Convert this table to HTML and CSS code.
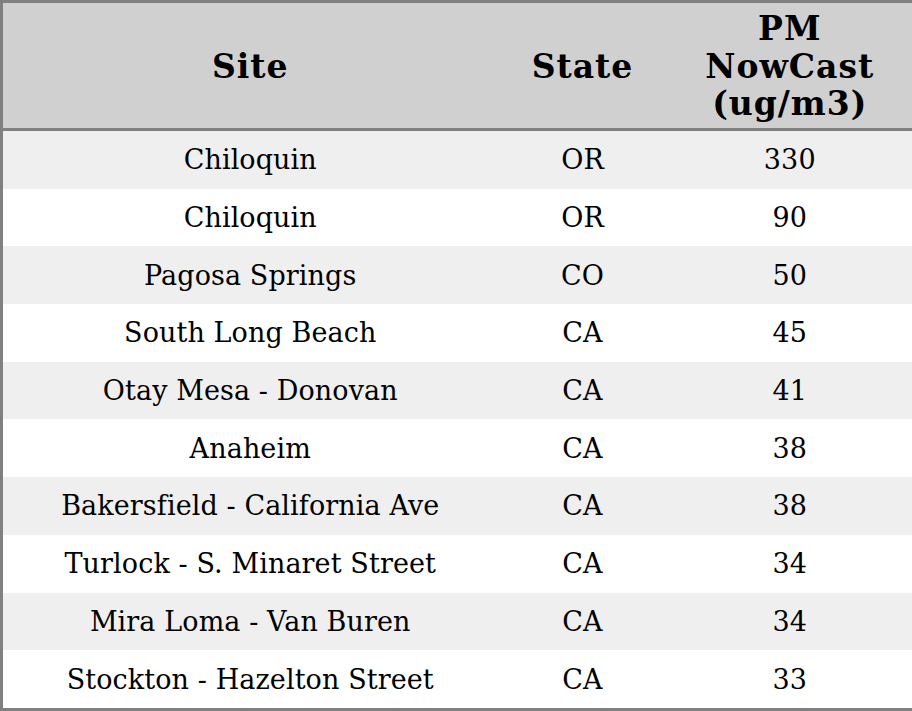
FILE: index.html
```html
<!DOCTYPE html>
<html>
<head>
<meta charset="utf-8">
<link rel="stylesheet" href="styles.css">
</head>
<body>
<table class="aq">
  <colgroup>
    <col class="c-site">
    <col class="c-state">
    <col class="c-pm">
  </colgroup>
  <thead>
    <tr><th>Site</th><th>State</th><th>PM<br>NowCast<br>(ug/m3)</th></tr>
  </thead>
  <tbody>
    <tr><td>Chiloquin</td><td>OR</td><td>330</td></tr>
    <tr><td>Chiloquin</td><td>OR</td><td>90</td></tr>
    <tr><td>Pagosa Springs</td><td>CO</td><td>50</td></tr>
    <tr><td>South Long Beach</td><td>CA</td><td>45</td></tr>
    <tr><td>Otay Mesa - Donovan</td><td>CA</td><td>41</td></tr>
    <tr><td>Anaheim</td><td>CA</td><td>38</td></tr>
    <tr><td>Bakersfield - California Ave</td><td>CA</td><td>38</td></tr>
    <tr><td>Turlock - S. Minaret Street</td><td>CA</td><td>34</td></tr>
    <tr><td>Mira Loma - Van Buren</td><td>CA</td><td>34</td></tr>
    <tr><td>Stockton - Hazelton Street</td><td>CA</td><td>33</td></tr>
  </tbody>
</table>
</body>
</html>
```
FILE: styles.css
```css
html, body {
  margin: 0;
  padding: 0;
  background: #ffffff;
}
.aq {
  width: 912px;
  height: 711px;
  border-collapse: collapse;
  border: 3px solid #808080;
  font-family: "DejaVu Serif", serif;
  color: #000;
  table-layout: fixed;
}
.c-site { width: 496px; }
.c-state { width: 170px; }
.c-pm { width: 246px; }
.aq th {
  background: #d0d0d0;
  font-weight: bold;
  font-size: 33px;
  letter-spacing: 1px;
  line-height: 37.5px;
  height: 123px;
  padding: 2px 0 0 0;
  border-bottom: 3px solid #808080;
  text-align: center;
  vertical-align: middle;
}
.aq td {
  font-size: 27px;
  letter-spacing: 0.1px;
  height: 57px;
  padding: 0;
  text-align: center;
  vertical-align: middle;
}
.aq tbody tr:nth-child(odd) td {
  background: #efefef;
}
```
